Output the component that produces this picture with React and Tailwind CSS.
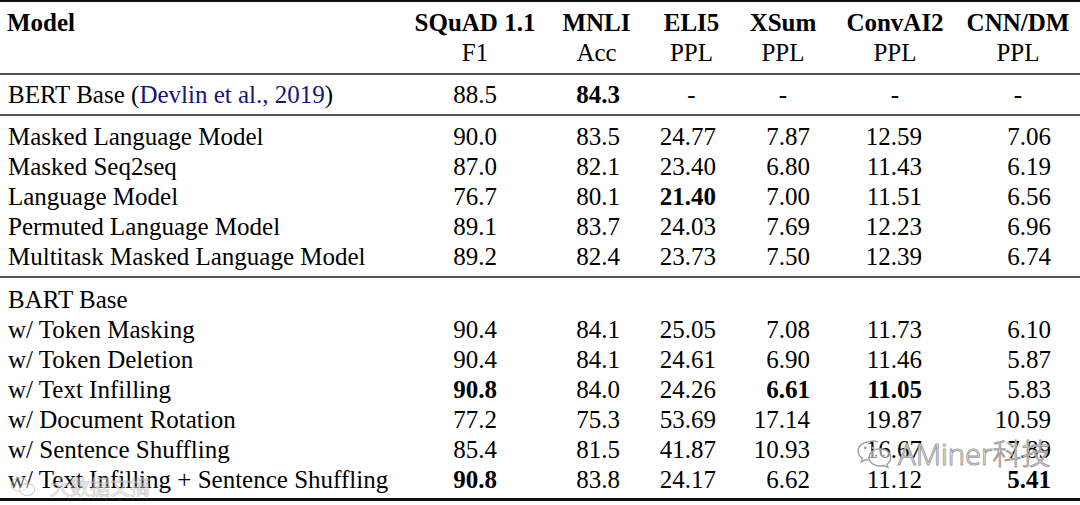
import React from "react";

const COLS = "grid grid-cols-[414px_122px_121px_69px_114px_110px_136px]";
const PADS = ["pr-[39px]", "pr-[37px]", "pr-[10px]", "pr-[30px]", "pr-[28px]", "pr-[35px]"];

const rows1 = [
  ["Masked Language Model", "90.0", "83.5", "24.77", "7.87", "12.59", "7.06"],
  ["Masked Seq2seq", "87.0", "82.1", "23.40", "6.80", "11.43", "6.19"],
  ["Language Model", "76.7", "80.1", "*21.40", "7.00", "11.51", "6.56"],
  ["Permuted Language Model", "89.1", "83.7", "24.03", "7.69", "12.23", "6.96"],
  ["Multitask Masked Language Model", "89.2", "82.4", "23.73", "7.50", "12.39", "6.74"],
];

const rows2 = [
  ["w/ Token Masking", "90.4", "84.1", "25.05", "7.08", "11.73", "6.10"],
  ["w/ Token Deletion", "90.4", "84.1", "24.61", "6.90", "11.46", "5.87"],
  ["w/ Text Infilling", "*90.8", "84.0", "24.26", "*6.61", "*11.05", "5.83"],
  ["w/ Document Rotation", "77.2", "75.3", "53.69", "17.14", "19.87", "10.59"],
  ["w/ Sentence Shuffling", "85.4", "81.5", "41.87", "10.93", "16.67", "7.89"],
  ["w/ Text Infilling + Sentence Shuffling", "*90.8", "83.8", "24.17", "6.62", "11.12", "*5.41"],
];

function Row({ r }) {
  return (
    <div className={COLS}>
      <div className="pl-[8px] whitespace-nowrap">{r[0]}</div>
      {r.slice(1).map((v, i) => {
        const bold = v.startsWith("*");
        return (
          <div key={i} className={`text-right whitespace-nowrap ${PADS[i]} ${bold ? "font-bold" : ""}`}>
            {bold ? v.slice(1) : v}
          </div>
        );
      })}
    </div>
  );
}

function WeChatIcon() {
  return (
    <svg width="36" height="30" viewBox="0 0 40 34" fill="none">
      <g stroke="#a0a0a0" strokeWidth="1.6" fill="rgba(255,255,255,0.55)">
        <path d="M15 3C7.8 3 2 7.8 2 13.6c0 3.3 1.8 6.2 4.7 8.1L5.5 26l4.6-2.6c1.5.4 3.2.7 4.9.7" />
        <path d="M15 24.1c-0.4-1-0.6-2-0.6-3.1 0-5.6 5.5-10 12.3-10S39 15.4 39 21c0 3.1-1.6 5.8-4.2 7.6l1 3.7-4-2.3c-1.3.4-2.8.6-4.3.6-6.2 0-11.3-3-12.5-6.5z" />
        <path d="M24.8 3.6C21.9 2.3 18.5 1.8 15 3" />
      </g>
      <circle cx="10" cy="10" r="1.6" fill="#a0a0a0" />
      <circle cx="19" cy="10" r="1.6" fill="#a0a0a0" />
      <circle cx="22.5" cy="19" r="1.3" fill="#a0a0a0" />
      <circle cx="31" cy="19" r="1.3" fill="#a0a0a0" />
    </svg>
  );
}

export default function App() {
  return (
    <div className="relative w-[1080px] h-[505px] overflow-hidden bg-white text-black font-['Liberation_Serif','Times_New_Roman',serif] text-[25px] leading-[30px]">
      <div className="h-[2px] bg-[#111]" />
      {/* header */}
      <div className="pt-[6px] pb-[5px]">
        <div className={COLS}>
          <div className="pl-[7px] font-bold">Model</div>
          <div className="text-center font-bold whitespace-nowrap">SQuAD 1.1</div>
          <div className="text-center font-bold whitespace-nowrap">MNLI</div>
          <div className="text-center font-bold whitespace-nowrap">ELI5</div>
          <div className="text-center font-bold whitespace-nowrap">XSum</div>
          <div className="text-center font-bold whitespace-nowrap">ConvAI2</div>
          <div className="text-center font-bold whitespace-nowrap">CNN/DM</div>
        </div>
        <div className={COLS}>
          <div />
          <div className="text-center">F1</div>
          <div className="text-center">Acc</div>
          <div className="text-center">PPL</div>
          <div className="text-center">PPL</div>
          <div className="text-center">PPL</div>
          <div className="text-center">PPL</div>
        </div>
      </div>
      <div className="h-[2px] bg-[#555]" />
      {/* BERT */}
      <div className="pt-[5px] pb-[4px]">
        <div className={COLS}>
          <div className="pl-[8px] whitespace-nowrap">
            BERT Base (<span className="text-[#14147e]">Devlin et al., 2019</span>)
          </div>
          <div className="text-right pr-[39px]">88.5</div>
          <div className="text-right pr-[37px] font-bold">84.3</div>
          <div className="text-center">-</div>
          <div className="text-center">-</div>
          <div className="text-center">-</div>
          <div className="text-center">-</div>
        </div>
      </div>
      <div className="h-[2px] bg-[#555]" />
      <div className="pt-[6px] pb-[4px]">
        {rows1.map((r, i) => (
          <Row key={i} r={r} />
        ))}
      </div>
      <div className="h-[2px] bg-[#555]" />
      <div className="pt-[7px] pb-[3px]">
        <div className={COLS}>
          <div className="pl-[8px]">BART Base</div>
        </div>
        {rows2.map((r, i) => (
          <Row key={i} r={r} />
        ))}
      </div>
      <div className="h-[3px] bg-[#111]" />

      {/* watermarks */}
      <div className="absolute left-[856px] top-[438px] flex items-center gap-[6px] pointer-events-none">
        <WeChatIcon />
        <span className="font-['Noto_Sans','Noto_Sans_CJK_SC',sans-serif] text-[29px] leading-[32px] font-light text-white/70 [-webkit-text-stroke:1px_#a0a0a0]">
          AMiner科技
        </span>
      </div>
      <div className="absolute left-[10px] top-[475px] flex items-center gap-[14px] pointer-events-none opacity-60">
        <svg width="26" height="22" viewBox="0 0 30 26" fill="none">
          <g stroke="#b5b5b5" strokeWidth="1.3" fill="rgba(255,255,255,0.5)">
            <ellipse cx="11" cy="10" rx="10" ry="8" />
            <ellipse cx="20" cy="16" rx="9" ry="7" />
          </g>
        </svg>
        <span className="font-['Noto_Sans_CJK_SC',sans-serif] text-[20px] leading-[24px] text-white [-webkit-text-stroke:0.8px_#b0b0b0]">
          大数据文摘
        </span>
      </div>
    </div>
  );
}
